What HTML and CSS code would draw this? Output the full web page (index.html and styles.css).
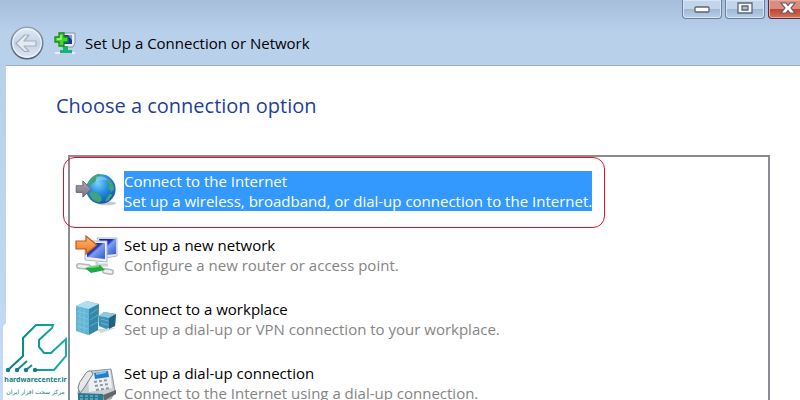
FILE: index.html
```
<!DOCTYPE html>
<html lang="en">
<head>
<meta charset="utf-8">
<title>Set Up a Connection or Network</title>
<link rel="stylesheet" href="styles.css">
</head>
<body>
<div class="window">
  <header class="titlebar">
    <div class="heading">
      <button class="back" aria-label="Back">
        <svg viewBox="0 0 34 34" width="34" height="34">
          <defs>
            <linearGradient id="disc" x1="0" y1="0" x2="0" y2="1"><stop offset="0" stop-color="#e2ecf7"/><stop offset=".5" stop-color="#c4d3e5"/><stop offset="1" stop-color="#dce8f4"/></linearGradient>
            <linearGradient id="rim" x1="0" y1="0" x2="0" y2="1"><stop offset="0" stop-color="#91a2b5"/><stop offset="1" stop-color="#4f6278"/></linearGradient>
          </defs>
          <circle cx="17" cy="17" r="15.7" fill="url(#disc)" stroke="url(#rim)" stroke-width="1.6"/>
          <circle cx="17" cy="17" r="14.2" fill="none" stroke="#edf4fb" stroke-width="1.2"/>
          <path d="M6 17.500 14.500 9h4.500L14 15H26v5H14l5 5.500h-4.500z" fill="#e3eaf2" stroke="#a3b1c0" stroke-width="1.200" stroke-linejoin="round"/>
        </svg>
      </button>
      <svg class="app-icon" viewBox="0 0 22 24" width="22" height="24">
        <path d="M8 2h13v10l-2 4H8z" fill="#e7ebf2" stroke="#8994ab"/>
        <path d="M10 4h8v9h-8z" fill="#1735b4"/><path d="M14 4h4v5z" fill="#7e9cec"/>
        <path d="M9 15h5v4h4v3H6v-3h3z" fill="#18b274"/><path d="M1 22h5M18 22h3" stroke="#e9eff2" stroke-width="2"/>
        <path d="M5 2h5v4h4v5h-4v4H5v-4H1V6h4z" fill="#45d52d" stroke="#158a1c" stroke-width="1.300"/>
        <path d="M7 4v4H3" fill="none" stroke="#b4f68e" stroke-width="1.300"/>
      </svg>
      <h1 class="title">Set Up a Connection or Network</h1>
    </div>
    <div class="controls">
      <button class="control" aria-label="Minimize"><svg viewBox="0 0 16 12" width="16" height="12"><rect x="1" y="5" width="14" height="5" rx="1" fill="#fff" stroke="#5d6672" stroke-width="1.300"/></svg></button>
      <button class="control" aria-label="Maximize"><svg viewBox="0 0 16 12" width="16" height="12"><path d="M1 1h14v10H1z" fill="#f5f7fa" stroke="#5d6672" stroke-width="1.300"/><path d="M5 4h6v4H5z" fill="#a9bfda" stroke="#5d6672" stroke-width="1.300"/></svg></button>
      <button class="control close" aria-label="Close"><svg viewBox="0 0 16 12" width="16" height="12"><path d="M1 1h5l2 2.500L10 1h5l-4 5 4 5h-5L8 8.500 6 11H1l4-5z" fill="#fff" stroke="#6c5964" stroke-width="1.200"/></svg></button>
    </div>
  </header>
  <main class="client">
    <h2 class="question">Choose a connection option</h2>
    <ul class="options">
      <li class="item marked">
        <button class="option selected">
          <svg class="icon" viewBox="0 0 46 40" width="44" height="38">
            <defs><radialGradient id="sea" cx=".4" cy=".3" r=".7"><stop offset="0" stop-color="#78cffa"/><stop offset=".5" stop-color="#278ee2"/><stop offset="1" stop-color="#1457ac"/></radialGradient><linearGradient id="gray" x1="0" y1="0" x2="0" y2="1"><stop offset="0" stop-color="#aaa6b2"/><stop offset="1" stop-color="#77727f"/></linearGradient></defs>
            <ellipse cx="31" cy="34" rx="10" ry="2" fill="#c9c9c9"/>
            <circle cx="25" cy="19" r="15.500" fill="url(#sea)"/>
            <path d="M13 10q4-6 10-7l3 2-5 2-2 4-5 4-3-1zM33 8q5 5 6 11l-3 3-3-4 1-4-3-3zM14 22l7 1 4 4 1 4-3 2q-7-1-10-8zM34 24l3 1-4 6-4 1z" fill="#3fa577"/>
            <path d="M20 6q8-2 13 4-8-2-13 2z" fill="#a7e1ff" opacity=".45"/>
            <path d="M-1 15.500h7v-5l9 8.500-9 8.500v-5h-7z" fill="url(#gray)" stroke="#686473"/>
          </svg>
          <span class="text"><span class="name">Connect to the Internet</span><span class="detail">Set up a wireless, broadband, or dial-up connection to the Internet.</span></span>
        </button>
      </li>
      <li class="item">
        <button class="option">
          <svg class="icon" viewBox="0 0 44 40" width="44" height="40">
            <defs><linearGradient id="screen" x1="0" y1="0" x2="1" y2="1"><stop offset="0" stop-color="#0b239c"/><stop offset=".4" stop-color="#1b34c4"/><stop offset=".5" stop-color="#7f9cf0"/><stop offset="1" stop-color="#3157cf"/></linearGradient><linearGradient id="orange" x1="0" y1="0" x2="0" y2="1"><stop offset="0" stop-color="#ffbd75"/><stop offset="1" stop-color="#ee7418"/></linearGradient></defs>
            <path d="M20 3h20v18l-12 2z" fill="#e8ebf2" stroke="#b5bdca"/><path d="M22 4h17v15l-10 1z" fill="url(#screen)"/>
            <path d="M8 6h22v21l-22-2z" fill="#edf0f6" stroke="#aeb7c7"/><path d="M10 8h18v16l-18-2z" fill="url(#screen)"/>
            <path d="M20 26v4h11" fill="none" stroke="#ccd1d8" stroke-width="3"/>
            <path d="M2 31l9 1M28 36l6 1" stroke="#b2b9b4" stroke-width="6" stroke-linecap="round"/><path d="M2 31l9 1M28 36l6 1" stroke="#edf0ec" stroke-width="3" stroke-linecap="round"/>
            <path d="M8 33l15-3 5 5-14 3z" fill="#1fa942"/><path d="M12 32l10-1" stroke="#75d989" stroke-width="2"/>
            <path d="M-1 6H9V1l11 9-11 9v-5H-1z" fill="url(#orange)" stroke="#b75a20" stroke-width="1.200"/>
          </svg>
          <span class="text"><span class="name">Set up a new network</span><span class="detail">Configure a new router or access point.</span></span>
        </button>
      </li>
      <li class="item">
        <button class="option">
          <svg class="icon" viewBox="0 0 44 40" width="44" height="40">
            <path d="M19 30l20-1-15 5z" fill="#d2d5d6"/>
            <path d="M22 17l5-4 12 2-1 12-9 3-7-3z" fill="#3e91b6"/><path d="M22 17l5-4 12 2-7 4z" fill="#8cc9df"/><path d="M32 19l7-4-1 12-6 3z" fill="#24617f"/>
            <path d="M-1 7L10 2l12 3-1 26-10 5-12-4z" fill="#63b5d4"/><path d="M-1 7L10 2l12 3-10 5z" fill="#aedff0"/><path d="M12 10l10-5-1 26-9 5z" fill="#3587a9"/>
            <path d="M0 12l11 3M0 17l11 3M0 22l11 3M0 27l11 3M3 8v25M7 9v26M13 15l8-5M13 21l8-5M13 27l8-4M24 20l7 2M24 24l7 2" stroke="#9bd8ec" stroke-width="1" opacity=".45"/>
          </svg>
          <span class="text"><span class="name">Connect to a workplace</span><span class="detail">Set up a dial-up or VPN connection to your workplace.</span></span>
        </button>
      </li>
      <li class="item">
        <button class="option">
          <svg class="icon" viewBox="0 0 44 40" width="44" height="40">
            <path d="M1 29l7-15 6-6 20-2 4 22-4 8-32 1z" fill="#c9ced3" stroke="#8e969c"/>
            <path d="M11 12l22-5 2 18-23 4z" fill="#edf0f2"/><path d="M17 10l14-2 1 6-14 2z" fill="#2380c8"/><path d="M19 11l10-2" stroke="#7cc8f1" stroke-width="2"/>
            <path d="M17 19l14-2M18 23l14-2M19 27l14-2" stroke="#8c98a5" stroke-width="2" stroke-dasharray="3 2"/>
            <path d="M1 25q0-5 6-12 3-6 7-5l2 3-9 14-4 5z" fill="#e5e7ea" stroke="#777f86"/>
            <path d="M1 30l25 1v7H1z" fill="#2b7794"/><path d="M3 33h20M3 36h20" stroke="#82cfda" stroke-dasharray="3 2"/>
            <path d="M26 32l13-5v4l-12 7z" fill="#62676b"/>
          </svg>
          <span class="text"><span class="name">Set up a dial-up connection</span><span class="detail">Connect to the Internet using a dial-up connection.</span></span>
        </button>
      </li>
    </ul>
  </main>
</div>
<aside class="brand">
  <svg viewBox="0 0 62 48" width="62" height="48">
    <defs><linearGradient id="teal" x1="0" y1="0" x2="1" y2="0"><stop offset="0" stop-color="#087e7c"/><stop offset="1" stop-color="#16b0ae"/></linearGradient></defs>
    <path d="M3 46l15-14V14L31 1h17l-1 3-13 12v7l5 6h7L61 15v17L49 46H30" fill="none" stroke="url(#teal)" stroke-width="2"/>
    <path d="M12 46l10-9M21 46l6-5" stroke="#168c91" stroke-width="2"/>
    <g fill="#127f86"><circle cx="3" cy="46" r="2.200"/><circle cx="12" cy="46" r="2.200"/><circle cx="21" cy="46" r="2.200"/><circle cx="30" cy="46" r="2.200"/></g>
  </svg>
  <span class="site">hardwarecenter.ir</span>
  <span class="tagline" lang="fa" dir="rtl">مرکز سخت افزار ایران</span>
</aside>
</body>
</html>
```
FILE: styles.css
```
* { box-sizing: border-box; }

body {
  margin: 0;
  height: 100vh;
  overflow: hidden;
  position: relative;
  font-family: "Open Sans", "Noto Sans", sans-serif;
  font-size: 15px;
  line-height: 20px;
  color: #000;
}

h1, h2, ul { margin: 0; padding: 0; font-weight: 400; }

button { font: inherit; border: 0; padding: 0; background: none; }

svg { display: block; flex: none; overflow: visible; }

.window {
  min-height: 100vh;
  display: flex;
  flex-direction: column;
  padding-left: 6px;
  background: linear-gradient(#a6bedb, #b9d0eb 32px, #bad1eb 100px, #c5dbf6);
}

.titlebar {
  display: flex;
  justify-content: space-between;
  align-items: flex-start;
  height: 66px;
  border-bottom: 1px solid #9fb3cc;
}

.heading { display: flex; align-items: center; padding: 26px 0 0 4px; }

.app-icon { margin: 0 9px 0 10px; }

.title { font-size: 15px; }

.controls { display: flex; gap: 3px; margin-right: -8px; }

.control {
  display: flex;
  justify-content: center;
  padding-top: 2px;
  width: 40px;
  height: 19px;
  border: 1px solid #6c809e;
  border-top: 0;
  border-radius: 0 0 4px 4px;
  background: linear-gradient(#c3d5ea 50%, #9fb7d4 50%, #b9cfe8);
  box-shadow: inset 0 0 0 1px #d8e5f3;
}

.close {
  border-color: #5c2c3b;
  background: linear-gradient(#d98d80 50%, #bd4430 50%, #d4735b);
  box-shadow: inset 0 0 0 1px #e6aa9f;
}

.client {
  flex: 1;
  display: flex;
  flex-direction: column;
  padding: 26px 30px 0 50px;
  background: #fff;
}

.question { font-size: 20px; line-height: 28px; color: #1f3f95; }

.options {
  flex: 1;
  display: flex;
  flex-direction: column;
  gap: 24px;
  margin: 35px 0 0 12px;
  padding: 14px 8px 0 7px;
  border: 2px solid #8b8b94;
  border-bottom: 0;
  list-style: none;
}

.item { position: relative; }

.marked::after {
  content: "";
  position: absolute;
  inset: -14px auto -17px -14px;
  width: 540px;
  border: 1px solid #dc1420;
  border-radius: 12px;
  pointer-events: none;
}

.option { display: flex; gap: 3px; text-align: left; white-space: nowrap; }

.text, .name, .detail { display: block; }

.detail { color: #858585; }

.selected .text { background: #3399ff; }

.selected .name, .selected .detail { color: #fff; }

.brand {
  position: absolute;
  left: 3px;
  bottom: 0;
  display: flex;
  flex-direction: column;
  align-items: center;
  width: 65px;
  height: 77px;
  padding-top: 1px;
  border-radius: 5px 0 0 0;
  background: #fff;
  color: #148084;
  white-space: nowrap;
}

.site { font: 700 7px/15px "Noto Sans", sans-serif; }

.tagline { font: 6px/10px "DejaVu Sans", sans-serif; }
```
